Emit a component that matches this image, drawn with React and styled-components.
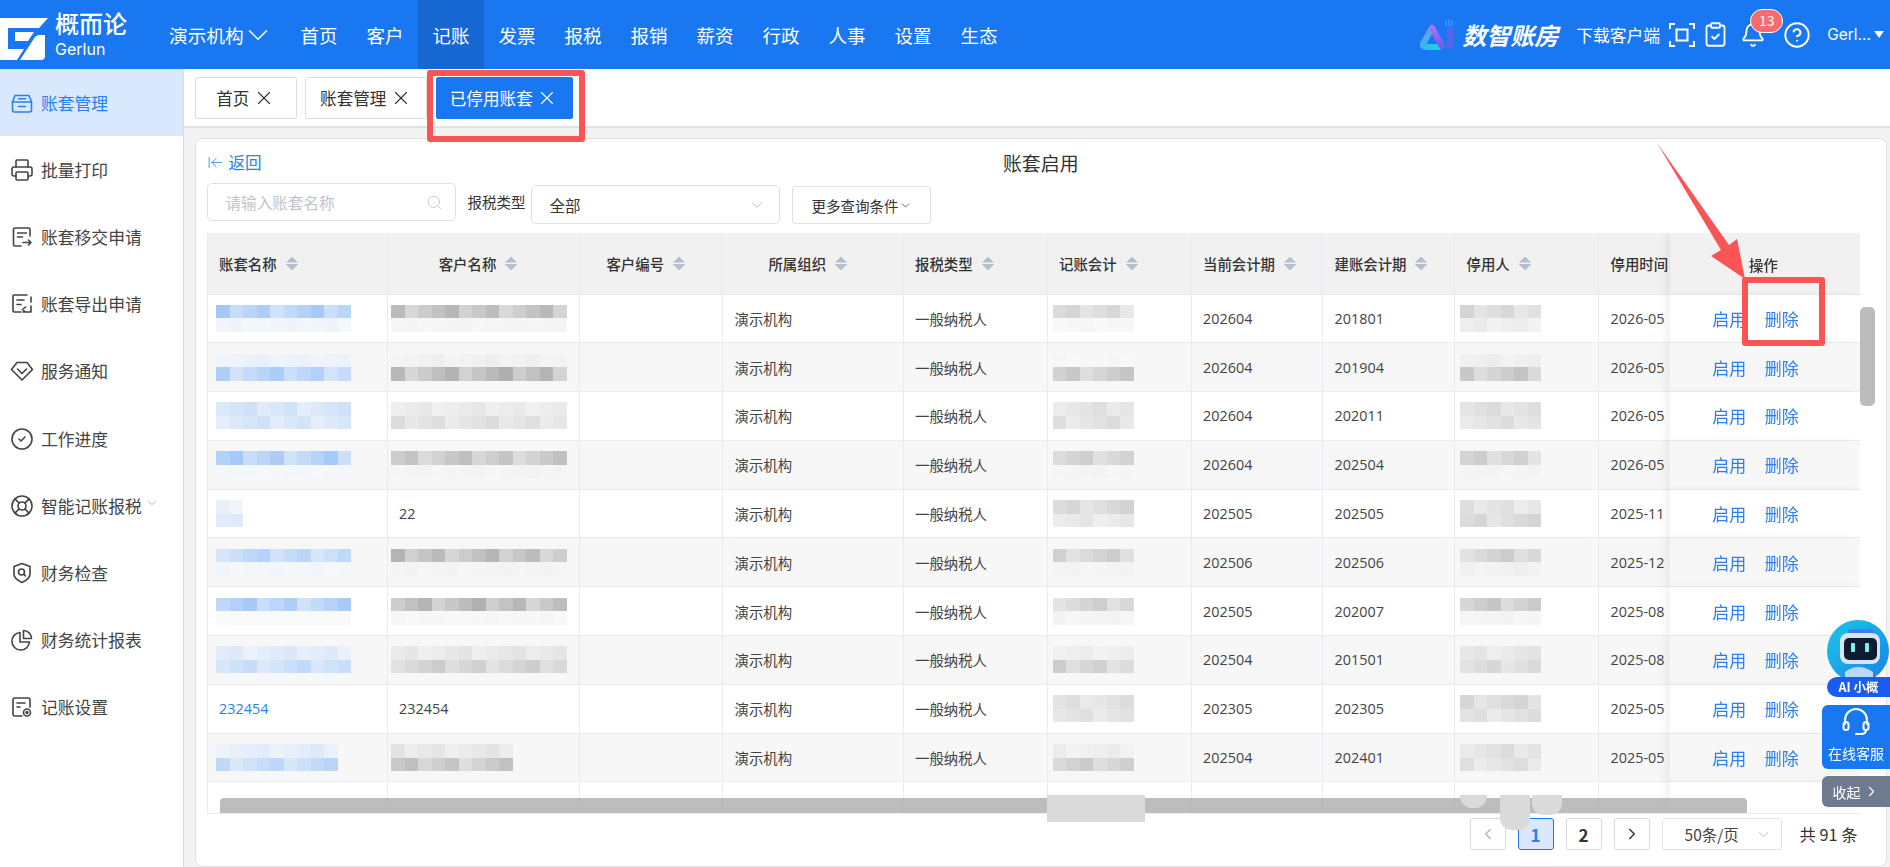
import React from "react";
import styled, { createGlobalStyle } from "styled-components";
import {
  ArrowLeftToLine,
  Bell,
  ChevronDown,
  ChevronLeft,
  ChevronRight,
  CircleCheck,
  CircleHelp,
  ClipboardCheck,
  LifeBuoy,
  Printer,
  Search,
  X,
} from "lucide-react";

const FONT = `"Noto Sans CJK SC", "Noto Sans", sans-serif`;
const BLUE = "#1a77f2";
const LINK = "#2b7ff0";
const RED = "#fb5454";

const GlobalStyle = createGlobalStyle`
  html, body { margin: 0; padding: 0; background: #fff; overflow: hidden; }
  body { font-family: ${FONT}; color: #333; }
  * { box-sizing: border-box; }
`;

// 마스킹 블록 색상 : 시드 기반으로 계산
const mosaicColor = (tone, strength, seed) => {
  const n = ((seed * 9301 + 49297) % 233280) / 233280;
  const mix = Math.min(1, strength * (0.45 + n * 0.55));
  const base = tone === "blue" ? [160, 198, 248] : [172, 172, 172];
  const c = base.map((v) => Math.round(250 + (v - 250) * mix));
  return `rgb(${c[0]},${c[1]},${c[2]})`;
};

const Mosaic = ({ tone, cols, lines, seed = 1 }) => (
  <MosaicGrid $cols={cols}>
    {lines.flatMap((strength, l) =>
      Array.from({ length: cols }).map((_, i) => (
        <span
          key={`${l}-${i}`}
          style={{ background: mosaicColor(tone, strength, seed * 31 + l * 17 + i * 7) }}
        />
      ))
    )}
  </MosaicGrid>
);

const NAV = ["首页", "客户", "记账", "发票", "报税", "报销", "薪资", "行政", "人事", "设置", "生态"];

const Svg = ({ children, size = 24 }) => (
  <svg width={size} height={size} viewBox="0 0 24 24" fill="none" stroke="currentColor" strokeWidth="1.6" strokeLinecap="round" strokeLinejoin="round">
    {children}
  </svg>
);

const DrawerIcon = () => (
  <Svg>
    <path d="M5 4.500h14l2.500 6.500v8a2 2 0 0 1-2 2h-15a2 2 0 0 1-2-2v-8z" />
    <path d="M2.500 11h19M8.500 7.800h7M8.500 15.500h7" />
  </Svg>
);
const TransferIcon = () => (
  <Svg>
    <path d="M20 11V4.500a1.500 1.500 0 0 0-1.500-1.500H5a1.500 1.500 0 0 0-1.500 1.500v15A1.500 1.500 0 0 0 5 21h6" />
    <path d="M7.500 8h9M7.500 12h5M13 17.500h8M18.500 15l2.500 2.500-2.500 2.500" />
  </Svg>
);
const ExportIcon = () => (
  <Svg>
    <path d="M17 3H4a1 1 0 0 0-1 1v15a1 1 0 0 0 1 1h7" />
    <path d="M7 8h7M7 12.500h4M21 10V5M21 20h-8M15.500 15l-3 2.500 3 2.500M21 14v6" />
  </Svg>
);
const DiamondIcon = () => (
  <Svg>
    <path d="M7 3.500h10l5.500 7-10.500 10.500L1.500 10.500z" />
    <path d="M7.500 10l4.500 4.500L16.500 10" />
  </Svg>
);
const ShieldIcon = () => (
  <Svg>
    <path d="M12 2.500l8 3v7.500c0 4-3.500 6.500-8 8.500-4.500-2-8-4.500-8-8.500V5.500z" />
    <circle cx="11.500" cy="11" r="3" />
    <path d="M13.800 13.300l1.700 1.700" />
  </Svg>
);
const PieIcon = () => (
  <Svg>
    <path d="M10 4.500a8.800 8.800 0 1 0 9.500 9.500H10z" />
    <path d="M13.500 2.500a8 8 0 0 1 8 8h-8z" />
  </Svg>
);
const CardGearIcon = () => (
  <Svg>
    <path d="M12 21H5a2 2 0 0 1-2-2V5a2 2 0 0 1 2-2h13a2 2 0 0 1 2 2v7" />
    <path d="M7 8h8M7 12h3" />
    <circle cx="17" cy="17.500" r="3.500" />
    <circle cx="17" cy="17.500" r="1" fill="currentColor" />
  </Svg>
);

const SIDE = [
  { label: "账套管理", icon: <DrawerIcon />, active: true },
  { label: "批量打印", icon: <Printer size={24} strokeWidth={1.6} /> },
  { label: "账套移交申请", icon: <TransferIcon /> },
  { label: "账套导出申请", icon: <ExportIcon /> },
  { label: "服务通知", icon: <DiamondIcon /> },
  { label: "工作进度", icon: <CircleCheck size={24} strokeWidth={1.6} /> },
  { label: "智能记账报税", icon: <LifeBuoy size={24} strokeWidth={1.6} />, more: true },
  { label: "财务检查", icon: <ShieldIcon /> },
  { label: "财务统计报表", icon: <PieIcon /> },
  { label: "记账设置", icon: <CardGearIcon /> },
];

const COLUMNS = [
  { title: "账套名称", width: 180, sort: true },
  { title: "客户名称", width: 192, sort: true, center: true },
  { title: "客户编号", width: 143.5, sort: true, center: true },
  { title: "所属组织", width: 180.5, sort: true, center: true },
  { title: "报税类型", width: 144, sort: true },
  { title: "记账会计", width: 144, sort: true },
  { title: "当前会计期", width: 131.5, sort: true },
  { title: "建账会计期", width: 132, sort: true },
  { title: "停用人", width: 144, sort: true },
  { title: "停用时间", width: 180 },
];

const ROWS = [
  { name: [10, [1, 0.12]], cust: [13, [0.9, 0.08]], acct: [6, [0.5, 0.05]], user: [6, [0.5, 0.2]], cur: "202604", start: "201801", date: "2026-05" },
  { name: [10, [0.2, 0.9]], cust: [13, [0.15, 1]], acct: [6, [0.05, 0.7]], user: [6, [0.2, 0.7]], cur: "202604", start: "201904", date: "2026-05" },
  { name: [10, [0.5, 0.5]], cust: [13, [0.25, 0.4]], acct: [6, [0.35, 0.4]], user: [6, [0.4, 0.4]], cur: "202604", start: "202011", date: "2026-05" },
  { name: [10, [1, 0.08]], cust: [13, [0.8, 0.1]], acct: [6, [0.6, 0.1]], user: [6, [0.6, 0.1]], cur: "202604", start: "202504", date: "2026-05" },
  { name: [2, [0.2, 0.35]], custText: "22", acct: [6, [0.5, 0.3]], user: [6, [0.4, 0.5]], cur: "202505", start: "202505", date: "2025-11" },
  { name: [10, [0.8, 0.1]], cust: [13, [0.9, 0.1]], acct: [6, [0.6, 0.1]], user: [6, [0.6, 0.15]], cur: "202506", start: "202506", date: "2025-12" },
  { name: [10, [1, 0.02]], cust: [13, [1, 0.05]], acct: [6, [0.6, 0.1]], user: [6, [0.7, 0.1]], cur: "202505", start: "202007", date: "2025-08" },
  { name: [10, [0.35, 0.65]], cust: [13, [0.3, 0.6]], acct: [6, [0.2, 0.6]], user: [6, [0.3, 0.5]], cur: "202504", start: "201501", date: "2025-08" },
  { nameText: "232454", custText: "232454", acct: [6, [0.4, 0.4]], user: [6, [0.5, 0.4]], cur: "202305", start: "202305", date: "2025-05" },
  { name: [9, [0.3, 0.75]], cust: [9, [0.3, 0.8]], acct: [6, [0.2, 0.6]], user: [6, [0.4, 0.4]], cur: "202504", start: "202401", date: "2025-05" },
];

const App = () => (
  <Page>
    <GlobalStyle />
    <Header>
      <Brand>
        <svg width="48" height="43" viewBox="0 0 48 43" fill="#fff">
          <path d="M0 0H48L39 10H8V31H24L17 42H0Z" />
          <path d="M15 14H34L28 23H15Z" />
          <path d="M45 17V38Q45 42 41 42H20L35 19Q37 17 40 17Z" />
        </svg>
        <BrandText>
          <BrandName>概而论</BrandName>
          <BrandLatin>Gerlun</BrandLatin>
        </BrandText>
      </Brand>
      <OrgPicker>
        演示机构
        <ChevronDown size={34} strokeWidth={1.1} />
      </OrgPicker>
      <Nav>
        {NAV.map((item) => (
          <NavItem key={item} $active={item === "记账"}>{item}</NavItem>
        ))}
      </Nav>
      <HeaderRight>
        <AiLogo>
          <svg width="36" height="32" viewBox="0 0 36 32" fill="none" strokeWidth="6" strokeLinecap="round">
            <defs>
              <linearGradient id="aiA" x1="0" y1="0" x2="0" y2="1">
                <stop offset="0" stopColor="#b06ff7" />
                <stop offset="1" stopColor="#6f5cf0" />
              </linearGradient>
              <linearGradient id="aiB" x1="0" y1="0" x2="1" y2="1">
                <stop offset="0" stopColor="#8f8cf5" />
                <stop offset="0.5" stopColor="#35b8ee" />
                <stop offset="1" stopColor="#16dcc8" />
              </linearGradient>
            </defs>
            <path d="M13 9L4 25Q3 28 7 28H20" stroke="url(#aiB)" />
            <path d="M13 9L23 27" stroke="url(#aiA)" />
            <path d="M31 11V27" stroke="#5a62ea" />
            <path d="M27 2V7M30 1V7M33 2V7" stroke="#53a7f5" strokeWidth="1" />
          </svg>
          <AiName>数智账房</AiName>
        </AiLogo>
        <Download>下载客户端</Download>
        <HeaderIcon>
          <svg width="26" height="26" viewBox="0 0 26 26" fill="none" stroke="#fff" strokeWidth="2">
            <path d="M1 7V2h5M20 2h5v5M25 19v5h-5M6 24H1v-5" />
            <rect x="7.500" y="7.500" width="11" height="11" />
          </svg>
        </HeaderIcon>
        <HeaderIcon>
          <ClipboardCheck size={27} strokeWidth={1.6} />
        </HeaderIcon>
        <BellWrap>
          <Bell size={26} strokeWidth={1.7} />
          <Badge>13</Badge>
        </BellWrap>
        <HeaderIcon>
          <CircleHelp size={28} strokeWidth={1.7} />
        </HeaderIcon>
        <UserName>Gerl...</UserName>
        <Caret />
      </HeaderRight>
    </Header>

    <Body>
      <Sidebar>
        {SIDE.map((item) => (
          <SideItem key={item.label} $active={item.active}>
            <SideIcon>{item.icon}</SideIcon>
            {item.label}
            {item.more && <MoreChevron><ChevronDown size={14} strokeWidth={1.2} /></MoreChevron>}
          </SideItem>
        ))}
      </Sidebar>

      <Main>
        <TabBar>
          <Tab $width={102}>首页<X size={22} strokeWidth={1.2} /></Tab>
          <Tab $width={122}>账套管理<X size={22} strokeWidth={1.2} /></Tab>
          <Tab $width={137} $active>已停用账套<X size={22} strokeWidth={1.2} /></Tab>
        </TabBar>

        <Content>
          <Card>
            <TitleRow>
              <BackLink><ArrowLeftToLine size={17} strokeWidth={1.2} />返回</BackLink>
              <Title>账套启用</Title>
            </TitleRow>

            <FilterRow>
              <SearchBox>
                请输入账套名称
                <Search size={17} strokeWidth={1.3} />
              </SearchBox>
              <FilterLabel>报税类型</FilterLabel>
              <SelectBox>
                全部
                <ChevronDown size={18} strokeWidth={1.1} />
              </SelectBox>
              <MoreButton>
                更多查询条件
                <ChevronDown size={13} strokeWidth={1.3} />
              </MoreButton>
            </FilterRow>

            <TableFrame>
              <TableClip>
                <Table>
                  <colgroup>
                    {COLUMNS.map((c) => <col key={c.title} style={{ width: c.width }} />)}
                    <col style={{ width: 190 }} />
                  </colgroup>
                  <thead>
                    <tr>
                      {COLUMNS.map((c) => (
                        <Th key={c.title} $center={c.center}>
                          <ThInner>
                            {c.title}
                            {c.sort && <SortIcon />}
                          </ThInner>
                        </Th>
                      ))}
                      <FixedTh>操作</FixedTh>
                    </tr>
                  </thead>
                  <tbody>
                    {ROWS.map((row, i) => (
                      <Tr key={i} $even={i % 2 === 1}>
                        <Td $name={!row.nameText}>
                          {row.nameText ? <NameLink>{row.nameText}</NameLink> : <Mosaic tone="blue" cols={row.name[0]} lines={row.name[1]} seed={i + 3} />}
                        </Td>
                        <Td $flush>
                          {row.custText ? <Pad>{row.custText}</Pad> : <Mosaic tone="gray" cols={row.cust[0]} lines={row.cust[1]} seed={i + 11} />}
                        </Td>
                        <Td />
                        <Td>演示机构</Td>
                        <Td>一般纳税人</Td>
                        <Td $tiny><Mosaic tone="gray" cols={row.acct[0]} lines={row.acct[1]} seed={i + 23} /></Td>
                        <Td>{row.cur}</Td>
                        <Td>{row.start}</Td>
                        <Td $tiny><Mosaic tone="gray" cols={row.user[0]} lines={row.user[1]} seed={i + 37} /></Td>
                        <Td>{row.date}</Td>
                        <FixedTd $even={i % 2 === 1}>
                          <Actions><ActionLink>启用</ActionLink><ActionLink>删除</ActionLink></Actions>
                        </FixedTd>
                      </Tr>
                    ))}
                    <Tr>
                      {COLUMNS.map((c) => <Td key={c.title} />)}
                      <FixedTd />
                    </Tr>
                  </tbody>
                </Table>
                <HScrollThumb />
              </TableClip>
              <VScrollTrack><VScrollThumb /></VScrollTrack>
            </TableFrame>

            <Pagination>
              <PageButton $muted><ChevronLeft size={18} strokeWidth={2} /></PageButton>
              <PageButton $active>1</PageButton>
              <PageButton>2</PageButton>
              <PageButton><ChevronRight size={18} strokeWidth={2} /></PageButton>
              <PageSize>50条/页<ChevronDown size={17} strokeWidth={1.2} /></PageSize>
              <Total>共 91 条</Total>
            </Pagination>
          </Card>
        </Content>
      </Main>
    </Body>

    <Smudge $x={1047} $y={795} $w={98} $h={27} $flat />
    <Smudge $x={1460} $y={795} $w={27} $h={13} />
    <Smudge $x={1500} $y={795} $w={30} $h={35} />
    <Smudge $x={1532} $y={795} $w={30} $h={20} />

    <FloatDock>
      <Robot>
        <svg width="63" height="62" viewBox="0 0 63 62">
          <defs>
            <linearGradient id="robotBg" x1="0" y1="0" x2="1" y2="1">
              <stop offset="0" stopColor="#1cc8e8" />
              <stop offset="1" stopColor="#1a80ea" />
            </linearGradient>
          </defs>
          <circle cx="31" cy="31" r="31" fill="url(#robotBg)" />
          <rect x="21" y="9" width="26" height="6" rx="3" fill="#3f7fe8" />
          <rect x="13" y="13" width="40" height="31" rx="8" fill="#d8e4f4" />
          <rect x="17" y="18" width="33" height="22" rx="5" fill="#0d1c33" />
          <rect x="24" y="23" width="4" height="9" rx="1" fill="#7ff3e4" />
          <rect x="38" y="23" width="4" height="9" rx="1" fill="#7ff3e4" />
          <path d="M18 52q13-10 28 0v6H18z" fill="#bcd7f5" />
        </svg>
        <AiPill>AI 小概</AiPill>
      </Robot>
      <ServiceBox>
        <svg width="30" height="30" viewBox="0 0 30 30" fill="none" stroke="#fff" strokeWidth="2" strokeLinecap="round">
          <path d="M4 17V13a11 11 0 0 1 22 0v4" />
          <rect x="2.500" y="15" width="5" height="8" rx="2.500" />
          <rect x="22.500" y="15" width="5" height="8" rx="2.500" />
          <path d="M25 23q0 4-5 4h-5" />
        </svg>
        在线客服
      </ServiceBox>
      <CollapseBox>收起<ChevronRight size={17} strokeWidth={1.5} /></CollapseBox>
    </FloatDock>

    <TabHighlight />
    <DeleteHighlight />
    <ArrowMark width="100" height="145" viewBox="0 0 100 145">
      <path d="M1 1L73 103L81 97L89 137L55 114L65 108Z" fill={RED} />
    </ArrowMark>
  </Page>
);

const Page = styled.div`
  position: relative;
  width: 100%;
  height: 867px;
  overflow: hidden;
  display: flex;
  flex-direction: column;
`;

const Header = styled.header`
  display: flex;
  align-items: center;
  flex: 0 0 69px;
  height: 69px;
  background: ${BLUE};
  color: #fff;
`;

const Brand = styled.div`
  display: flex;
  align-items: center;
  gap: 9px;
  width: 169px;
  padding-top: 9px;
`;

const BrandText = styled.div`
  display: flex;
  flex-direction: column;
  gap: 1px;
  margin-left: -2px;
  margin-top: -9px;
`;

const BrandName = styled.div`
  font-family: "Liberation Sans", "Noto Sans CJK SC", sans-serif;
  font-size: 24px;
  font-weight: 500;
  line-height: 27px;
`;

const BrandLatin = styled.div`
  font-family: "Inter", sans-serif;
  font-size: 16px;
  line-height: 20px;
`;

const OrgPicker = styled.div`
  display: flex;
  align-items: center;
  width: 117px;
  font-size: 18.7px;
  svg { flex: none; margin: 0 -6px 0 -3px; }
`;

const Nav = styled.nav`
  display: flex;
  height: 100%;
`;

const NavItem = styled.div`
  display: flex;
  align-items: center;
  justify-content: center;
  width: 66px;
  font-size: 18.5px;
  background: ${({ $active }) => ($active ? "#1767d3" : "transparent")};
`;

const HeaderRight = styled.div`
  display: flex;
  align-items: center;
  margin-left: auto;
  padding-right: 6px;
`;

const AiLogo = styled.div`
  display: flex;
  align-items: center;
  gap: 7px;
  margin-right: 18px;
`;

const AiName = styled.div`
  font-size: 24px;
  font-weight: 700;
  font-style: italic;
`;

const Download = styled.div`
  font-size: 16.8px;
  margin-right: 9px;
`;

const HeaderIcon = styled.div`
  display: flex;
  margin-right: 7px;
`;

const BellWrap = styled.div`
  position: relative;
  display: flex;
  margin: 0 17px 0 4px;
`;

const Badge = styled.span`
  position: absolute;
  top: -13px;
  left: 10px;
  width: 33px;
  height: 24px;
  border-radius: 12px;
  border: 1px solid #fff;
  background: #f56c6c;
  font-size: 14px;
  line-height: 21px;
  text-align: center;
`;

const UserName = styled.div`
  font-family: "Inter", sans-serif;
  font-size: 15.5px;
  margin-left: 9px;
  margin-right: 3px;
`;

const Caret = styled.span`
  width: 0;
  height: 0;
  border-left: 5.5px solid transparent;
  border-right: 5.5px solid transparent;
  border-top: 7px solid #fff;
`;

const Body = styled.div`
  display: flex;
  flex: 1;
  min-height: 0;
`;

const Sidebar = styled.aside`
  flex: 0 0 184px;
  border-right: 1px solid #dcdcdc;
  background: #fff;
`;

const SideItem = styled.div`
  display: flex;
  align-items: center;
  height: 67.2px;
  padding-left: 10px;
  font-size: 16.8px;
  color: ${({ $active }) => ($active ? LINK : "#444")};
  background: ${({ $active }) => ($active ? "#d9e8fd" : "#fff")};
`;

const SideIcon = styled.span`
  display: flex;
  flex: none;
  width: 31px;
`;

const MoreChevron = styled.span`
  display: flex;
  color: #999;
  margin: -5px 0 0 3px;
`;

const Main = styled.main`
  flex: 1;
  min-width: 0;
  display: flex;
  flex-direction: column;
  background: #f3f3f3;
`;

const TabBar = styled.div`
  display: flex;
  align-items: flex-start;
  gap: 8.5px;
  flex: 0 0 59px;
  padding: 8px 0 0 10.5px;
  background: #fff;
  border-bottom: 2px solid #e2e2e2;
`;

const Tab = styled.div`
  display: flex;
  align-items: center;
  justify-content: center;
  gap: 3.5px;
  width: ${({ $width }) => $width}px;
  height: 42px;
  border: 1px solid ${({ $active }) => ($active ? BLUE : "#ddd")};
  border-radius: 2px;
  font-size: 16.6px;
  color: ${({ $active }) => ($active ? "#fff" : "#333")};
  background: ${({ $active }) => ($active ? BLUE : "#fff")};
`;

const Content = styled.div`
  flex: 1;
  min-height: 0;
  padding: 10px 3px 0 11px;
`;

const Card = styled.section`
  height: 100%;
  padding: 8px 11px 0 10.5px;
  background: #fff;
  border: 1px solid #e2e2e2;
  border-radius: 8px;
`;

const TitleRow = styled.div`
  display: grid;
  grid-template-columns: 1fr auto 1fr;
  align-items: center;
  height: 30px;
`;

const BackLink = styled.div`
  display: flex;
  align-items: center;
  gap: 5px;
  font-size: 16.6px;
  color: ${LINK};
`;

const Title = styled.div`
  font-size: 18.9px;
  color: #333;
`;

const FilterRow = styled.div`
  display: flex;
  align-items: flex-start;
  height: 50px;
  margin-top: 6px;
`;

const SearchBox = styled.div`
  display: flex;
  align-items: center;
  justify-content: space-between;
  width: 249px;
  height: 38px;
  padding: 0 12px 0 18px;
  border: 1px solid #dfe1e6;
  border-radius: 5px;
  font-size: 15.6px;
  color: #c0c4cc;
`;

const FilterLabel = styled.div`
  margin: 8px 5px 0 12px;
  font-size: 14.5px;
  color: #333;
`;

const SelectBox = styled.div`
  display: flex;
  align-items: center;
  justify-content: space-between;
  width: 249px;
  height: 39px;
  margin-top: 2px;
  padding: 0 13px 0 18px;
  border: 1px solid #dfe1e6;
  border-radius: 5px;
  font-size: 15.5px;
  color: #333;
  svg { color: #aaa; }
`;

const MoreButton = styled.div`
  display: flex;
  align-items: center;
  width: 139px;
  height: 38px;
  margin: 3px 0 0 12px;
  padding-left: 19px;
  border: 1px solid #dfe1e6;
  border-radius: 3px;
  font-size: 14.5px;
  color: #333;
`;

const TableFrame = styled.div`
  display: flex;
  height: 581px;
`;

const TableClip = styled.div`
  position: relative;
  flex: 1;
  min-width: 0;
  overflow: hidden;
  border-left: 1px solid #e9ebf2;
  border-bottom: 1px solid #e9ebf2;
`;

const Table = styled.table`
  table-layout: fixed;
  width: 1761.5px;
  border-collapse: separate;
  border-spacing: 0;
`;

const Th = styled.th`
  height: 61.5px;
  padding: ${({ $center }) => ($center ? "0 10px 0 0" : "0 0 0 11.5px")};
  background: #f1f1f2;
  border-right: 1px solid #e9ebf2;
  border-bottom: 1px solid #e9ebf2;
  font-size: 14.4px;
  font-weight: 500;
  color: #333;
  text-align: ${({ $center }) => ($center ? "center" : "left")};
`;

const ThInner = styled.span`
  display: inline-flex;
  align-items: center;
  gap: 9px;
`;

const SortIcon = styled.i`
  display: inline-block;
  width: 12px;
  height: 15px;
  background:
    linear-gradient(to bottom right, transparent 50%, #b8bfcc 50%) 0 0 / 6px 6.500px no-repeat,
    linear-gradient(to bottom left, transparent 50%, #b8bfcc 50%) 6px 0 / 6px 6.500px no-repeat,
    linear-gradient(to top right, transparent 50%, #b8bfcc 50%) 0 8.500px / 6px 6.500px no-repeat,
    linear-gradient(to top left, transparent 50%, #b8bfcc 50%) 6px 8.500px / 6px 6.500px no-repeat;
`;

const FixedTh = styled.th`
  position: sticky;
  right: 0;
  padding: 2px 3px 0 0;
  background: #f1f1f2;
  border-bottom: 1px solid #e9ebf2;
  box-shadow: -6px 0 8px rgba(0, 0, 0, 0.05);
  font-size: 14.4px;
  font-weight: 500;
  color: #333;
  text-align: center;
`;

const Tr = styled.tr`
  background: ${({ $even }) => ($even ? "#f7f7f8" : "#fff")};
`;

const Td = styled.td`
  height: 48.8px;
  padding: ${({ $flush, $tiny, $name }) =>
    $flush ? "0 0 0 3.500px" : $tiny ? "0 0 0 5px" : $name ? "0 0 0 8.500px" : "0 0 0 11.500px"};
  border-right: 1px solid #e9ebf2;
  border-bottom: 1px solid #e9ebf2;
  font-family: "Open Sans", ${FONT};
  font-size: 14.4px;
  color: #444;
`;

const FixedTd = styled.td`
  position: sticky;
  right: 0;
  background: ${({ $even }) => ($even ? "#f7f7f8" : "#fff")};
  border-bottom: 1px solid #e9ebf2;
  box-shadow: -6px 0 8px rgba(0, 0, 0, 0.05);
`;

const Actions = styled.div`
  display: flex;
  justify-content: center;
  gap: 18.5px;
  padding-right: 19px;
`;

const ActionLink = styled.span`
  font-size: 17px;
  color: ${LINK};
`;

const NameLink = styled.span`
  color: ${LINK};
`;

const Pad = styled.span`
  display: block;
  padding-left: 8px;
`;

const MosaicGrid = styled.div`
  display: grid;
  width: max-content;
  grid-template-columns: repeat(${({ $cols }) => $cols}, 13.500px);
  grid-auto-rows: 13.500px;
`;

const HScrollThumb = styled.div`
  position: absolute;
  left: 12px;
  bottom: 0;
  width: 1527px;
  height: 15px;
  border-radius: 4px 4px 0 0;
  background: rgba(170, 170, 170, 0.78);
`;

const VScrollTrack = styled.div`
  flex: 0 0 15px;
  padding-top: 74px;
`;

const VScrollThumb = styled.div`
  width: 15px;
  height: 99px;
  border-radius: 5px;
  background: #bcbcbc;
`;

const Pagination = styled.div`
  display: flex;
  justify-content: flex-end;
  align-items: center;
  gap: 12px;
  height: 32px;
  margin-top: 4px;
  padding-right: 17.5px;
`;

const PageButton = styled.div`
  display: flex;
  align-items: center;
  justify-content: center;
  width: 36px;
  height: 32px;
  border: 1px solid ${({ $active }) => ($active ? BLUE : "#d8d8d8")};
  border-radius: 3px;
  background: ${({ $active }) => ($active ? "#d9e8fd" : "#fff")};
  font-size: 17px;
  font-weight: 700;
  color: ${({ $active, $muted }) => ($active ? LINK : $muted ? "#aab4c4" : "#333")};
`;

const PageSize = styled.div`
  display: flex;
  align-items: center;
  justify-content: space-between;
  width: 120px;
  height: 32px;
  padding: 0 9px 0 22px;
  border: 1px solid #e0e2e8;
  border-radius: 3px;
  font-size: 15.5px;
  color: #444;
  svg { color: #bbb; }
`;

const Total = styled.div`
  margin-left: 6px;
  font-size: 16.3px;
  color: #333;
`;

const Smudge = styled.div`
  position: absolute;
  left: ${({ $x }) => $x}px;
  top: ${({ $y }) => $y}px;
  width: ${({ $w }) => $w}px;
  height: ${({ $h }) => $h}px;
  background: #dadada;
  border-radius: ${({ $flat }) => ($flat ? "0" : "0 0 12px 12px")};
`;

const FloatDock = styled.div`
  position: absolute;
  right: 0;
  top: 620px;
  width: 68px;
  display: flex;
  flex-direction: column;
  align-items: flex-end;
`;

const Robot = styled.div`
  position: relative;
  width: 63px;
  height: 77px;
  svg { display: block; }
`;

const AiPill = styled.div`
  position: absolute;
  left: 0;
  top: 57px;
  width: 63px;
  height: 20px;
  border-radius: 10px 0 0 10px;
  background: #1a5cf0;
  color: #fff;
  font-size: 12.5px;
  font-weight: 700;
  line-height: 20px;
  text-align: center;
`;

const ServiceBox = styled.div`
  display: flex;
  flex-direction: column;
  align-items: center;
  gap: 7px;
  width: 68px;
  height: 64px;
  margin-top: 8px;
  padding-top: 2px;
  border-radius: 6px 0 0 6px;
  background: ${BLUE};
  color: #fff;
  font-size: 14px;
  line-height: 18px;
`;

const CollapseBox = styled.div`
  display: flex;
  align-items: center;
  justify-content: center;
  gap: 2px;
  width: 68px;
  height: 31px;
  margin-top: 7px;
  border-radius: 6px 0 0 6px;
  background: #6f7b8f;
  color: #fff;
  font-size: 14px;
`;

const TabHighlight = styled.div`
  position: absolute;
  left: 427px;
  top: 70px;
  width: 158px;
  height: 72px;
  border: 6px solid ${RED};
  border-radius: 3px;
`;

const DeleteHighlight = styled.div`
  position: absolute;
  left: 1742px;
  top: 277px;
  width: 83px;
  height: 69px;
  border: 6px solid ${RED};
  border-radius: 3px;
`;

const ArrowMark = styled.svg`
  position: absolute;
  left: 1656px;
  top: 142px;
`;

export default App;
